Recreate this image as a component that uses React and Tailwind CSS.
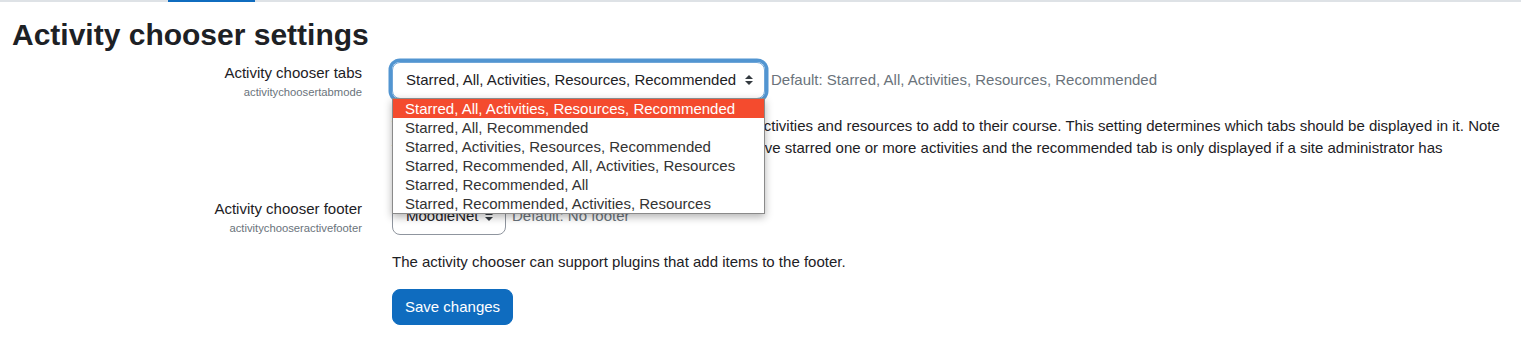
import React from "react";

function Arrow({ className = "" }) {
  return (
    <svg viewBox="0 0 4 5" width="8" height="10" className={className}>
      <path fill="#343a40" d="M2 0L0 2h4zm0 5L0 3h4z" />
    </svg>
  );
}

const options = [
  "Starred, All, Activities, Resources, Recommended",
  "Starred, All, Recommended",
  "Starred, Activities, Resources, Recommended",
  "Starred, Recommended, All, Activities, Resources",
  "Starred, Recommended, All",
  "Starred, Recommended, Activities, Resources",
];

export default function App() {
  return (
    <div className="min-h-[350px] bg-white font-['Liberation_Sans',Arial,sans-serif] text-[15px] leading-[22.5px] text-[#1d2125]">
      <div className="flex h-[2px] w-full bg-[#dee2e6]">
        <div className="ml-[168px] h-[2px] w-[87px] bg-[#0f6cbf]" />
      </div>
      <h2 className="ml-[12px] mt-[14.5px] text-[30px] font-bold leading-[36px]">
        Activity chooser settings
      </h2>

      <div className="mt-[9.5px] pr-[18px]">
        {/* Row 1 */}
        <div className="mb-4 grid grid-cols-[362px_1fr] gap-x-[30px]">
          <div className="text-right">
            <div className="leading-[22.5px]">Activity chooser tabs</div>
            <div className="text-[11.25px] leading-[14px] text-[#6a737b]">activitychoosertabmode</div>
          </div>
          <div>
            <div className="flex items-center">
              <div className="relative">
                <div className="flex h-[36.5px] w-[373px] items-center justify-between rounded-[0.5rem] border border-[#6fa6d8] pl-[13px] pr-[11px] text-[#1d2125] shadow-[0_0_0_3.5px_rgba(15,108,191,0.72)]">
                  <span>Starred, All, Activities, Resources, Recommended</span>
                  <Arrow />
                </div>
                <div className="absolute left-0 top-[35.5px] z-10 w-[373px] border border-[#8a8a8a] bg-white text-[#333] shadow-[0_3px_8px_rgba(0,0,0,0.3)]">
                  {options.map((o, i) => (
                    <div
                      key={o}
                      className={
                        i === 0
                          ? "h-[19px] bg-[#f44b2e] pl-[12px] leading-[19px] text-white"
                          : "h-[19px] pl-[12px] leading-[19px]"
                      }
                    >
                      {o}
                    </div>
                  ))}
                </div>
              </div>
              <span className="ml-[6px] text-[#6a737b]">
                Default: Starred, All, Activities, Resources, Recommended
              </span>
            </div>
            <div className="mt-4">
              The activity chooser enables a teacher to easily select activities and resources to add to their course. This setting determines which tabs should be displayed in it. Note that the starred tab is only displayed for a user if they have starred one or more activities and the recommended tab is only displayed if a site administrator has specified some recommended activities.
            </div>
          </div>
        </div>

        {/* Row 2 */}
        <div className="mb-4 grid grid-cols-[362px_1fr] gap-x-[30px]">
          <div className="text-right">
            <div className="leading-[22.5px]">Activity chooser footer</div>
            <div className="text-[11.25px] leading-[14px] text-[#6a737b]">activitychooseractivefooter</div>
          </div>
          <div>
            <div className="flex items-center">
              <div className="flex h-[36.5px] w-[114px] items-center justify-between rounded-[0.5rem] border border-[#8f959e] pl-[13px] pr-[12px]">
                <span>MoodleNet</span>
                <Arrow />
              </div>
              <span className="ml-[6px] text-[#6a737b]">Default: No footer</span>
            </div>
            <div className="mt-4">
              The activity chooser can support plugins that add items to the footer.
            </div>
            <div className="mt-4">
              <button className="h-[36px] rounded-[0.5rem] border border-[#0f6cbf] bg-[#0f6cbf] px-[12px] text-[15px] text-white">
                Save changes
              </button>
            </div>
          </div>
        </div>
      </div>
    </div>
  );
}
